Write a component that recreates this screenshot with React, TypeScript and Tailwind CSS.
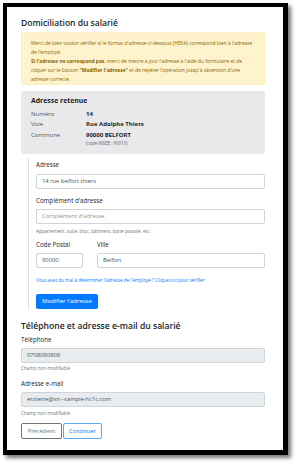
import React from 'react';

// Small reusable pieces for the scaled-down bootstrap-like form
function Label({ children, className = '' }: { children: React.ReactNode; className?: string }) {
  return <div className={`text-[6.2px] leading-[8px] text-[#212529] ${className}`}>{children}</div>;
}

function Input({ value, placeholder, disabled, className = '' }: { value?: string; placeholder?: string; disabled?: boolean; className?: string }) {
  return (
    <div
      className={`flex h-[15px] items-center rounded-[2px] border border-[#ced4da] px-[5px] text-[5.8px] ${
        disabled ? 'bg-[#e9ecef] text-[#495057]' : 'bg-white text-[#495057]'
      } ${className}`}
    >
      {value ? <span>{value}</span> : <span className="text-[#8a9097]">{placeholder}</span>}
    </div>
  );
}

function Help({ children, className = '' }: { children: React.ReactNode; className?: string }) {
  return <div className={`text-[4.6px] leading-[6px] text-[#6c757d] ${className}`}>{children}</div>;
}

export default function App() {
  return (
    <div className="h-[465px] w-[296px] bg-white pl-[3px] pt-[3px]" style={{ fontFamily: '"Open Sans", "Noto Sans", sans-serif' }}>
      <div className="h-[452px] w-[285px] border-b-[5px] border-l-4 border-r-[5px] border-t-4 border-black bg-white pl-[14px] pr-[18px] pt-[10px] shadow-[3px_3px_4px_rgba(0,0,0,0.55)]">
        <h1 className="text-[8.5px] font-semibold leading-[12px] text-[#212529]">Domiciliation du salarié</h1>

        {/* warning alert */}
        <div className="mt-[3px] h-[53px] rounded-[2px] border border-[#ffeeba] bg-[#fff3cd] pl-[9px] pt-[6px] text-[4.9px] leading-[9px] text-[#856404]">
          <div className="whitespace-nowrap">
            Merci de bien vouloir vérifier si le format d'adresse ci-dessous (HEXA) correspond bien à l'adresse
            <br />
            de l'employé.
          </div>
          <div className="whitespace-nowrap">
            <b>Si l'adresse ne correspond pas</b>, merci de mettre à jour l'adresse à l'aide du formulaire et de
            <br />
            cliquer sur le bouton <b>"Modifier l'adresse"</b> et de repéter l'opération jusqu'à obtention d'une
            <br />
            adresse correcte.
          </div>
        </div>

        {/* retained address */}
        <div className="mt-[6px] h-[63px] rounded-[2px] bg-[#e9e9eb] pl-[10px] pt-[5px] text-[#212529]">
          <div className="text-[6.9px] font-bold leading-[10px]">Adresse retenue</div>
          <div className="mt-[3px] grid grid-cols-[55px_1fr] text-[6px] leading-[10.3px]">
            <span className="text-[#555]">Numéro</span>
            <span className="font-bold">14</span>
            <span className="text-[#555]">Voie</span>
            <span className="font-bold">Rue Adolphe Thiers</span>
            <span className="text-[#555]">Commune</span>
            <span className="font-bold">90000 BELFORT</span>
            <span />
            <span className="text-[4.4px] leading-[7px] text-[#666]">(code INSEE : 90010)</span>
          </div>
        </div>

        {/* address form */}
        <div className="ml-[7px] mt-[4px] border-l border-[#dee2e6] pb-[1px] pl-[7px] pt-[3px]">
          <Label>Adresse</Label>
          <Input value="14 rue belfort thiers" className="mt-[5px]" />
          <Label className="mt-[8px]">Complément d'adresse</Label>
          <Input placeholder="Complément d'adresse" className="mt-[4px]" />
          <Help className="mt-[4px]">Appartement, suite, bloc, bâtiment, boite postale, etc.</Help>
          <div className="mt-[7px] flex gap-[14px]">
            <div className="w-[47px]">
              <Label>Code Postal</Label>
              <Input value="90000" className="mt-[4px]" />
            </div>
            <div className="flex-1">
              <Label>Ville</Label>
              <Input value="Belfort" className="mt-[4px]" />
            </div>
          </div>
          <div className="mt-[9px] whitespace-nowrap text-[4.6px] leading-[6px] text-[#007bff]">
            Vous avez du mal à déterminer l'adresse de l'employé ? Cliquez-ici pour vérifier
          </div>
          <button className="mt-[11px] h-[15px] rounded-[2px] bg-[#007bff] px-[6px] text-[6px] text-white">Modifier l'adresse</button>
        </div>

        {/* phone & email */}
        <h2 className="mt-[10px] text-[8.6px] font-semibold leading-[12px] text-[#212529]">Téléphone et adresse e-mail du salarié</h2>
        <Label className="mt-[4px]">Téléphone</Label>
        <Input value="0708080808" disabled className="mt-[4px]" />
        <Help className="mt-[2px]">Champ non-modifiable</Help>
        <Label className="mt-[9px]">Adresse e-mail</Label>
        <Input value="erzterte@xn--xample-hc1c.com" disabled className="mt-[4px]" />
        <Help className="mt-[3px]">Champ non-modifiable</Help>
        <div className="mt-[7px] flex gap-[1px]">
          <button className="h-[16px] w-[41px] rounded-[2px] border border-[#6c757d] bg-white text-[5.8px] text-[#6c757d]">Précédent</button>
          <button className="h-[16px] w-[39px] rounded-[2px] border border-[#5aa6ff] bg-white text-[5.8px] text-[#007bff]">Continuer</button>
        </div>
      </div>
    </div>
  );
}
